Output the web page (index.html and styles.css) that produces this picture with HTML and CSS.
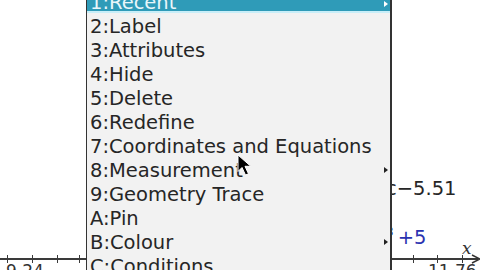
FILE: index.html
```
<!DOCTYPE html>
<html>
<head>
<meta charset="utf-8">
<link rel="stylesheet" href="styles.css">
</head>
<body>
<div class="screen">
  <div class="graph">
    <div class="axis"></div>
    <div class="tick" style="left:7px"></div>
    <div class="tick" style="left:32px"></div>
    <div class="tick" style="left:57px"></div>
    <div class="tick" style="left:79px"></div>
    <div class="tick" style="left:413px"></div>
    <div class="tick" style="left:437px"></div>
    <div class="tick" style="left:462px"></div>
    <svg class="arrowhead" width="10" height="10" viewBox="0 0 10 10"><path d="M1 1 L9 5 L1 9" fill="none" stroke="#333" stroke-width="1.5"/></svg>
    <span class="xlabel">x</span>
    <span class="num left">9.24</span>
    <span class="num right">11.76</span>
    <span class="eq eq1">c&minus;5.51</span>
    <span class="eq eq2"><sup>3</sup>+5</span>
  </div>
  <div class="menu">
    <div class="item active">1:Recent<span class="sub"></span></div>
    <div class="item">2:Label</div>
    <div class="item">3:Attributes</div>
    <div class="item">4:Hide</div>
    <div class="item">5:Delete</div>
    <div class="item">6:Redefine</div>
    <div class="item">7:Coordinates and Equations</div>
    <div class="item">8:Measurement<span class="sub"></span></div>
    <div class="item">9:Geometry Trace</div>
    <div class="item">A:Pin</div>
    <div class="item">B:Colour<span class="sub"></span></div>
    <div class="item">C:Conditions</div>
  </div>
  <svg class="cursor" width="16" height="23" viewBox="0 0 16 23"><path d="M1 1 L1 17.5 L5 13.5 L8.5 21 L11.5 19.8 L8 12.3 L13.8 12.3 Z" fill="#000" stroke="#fff" stroke-width="1"/></svg>
</div>
</body>
</html>
```
FILE: styles.css
```
html, body {
  margin: 0;
  padding: 0;
  background: #fff;
  overflow: hidden;
}
.screen {
  position: relative;
  width: 480px;
  height: 270px;
  overflow: hidden;
  background: #fff;
  font-family: "DejaVu Sans", sans-serif;
}
.graph {
  position: absolute;
  inset: 0;
}
.axis {
  position: absolute;
  left: 0;
  top: 258px;
  width: 478px;
  height: 2px;
  background: #3a3a3a;
}
.tick {
  position: absolute;
  top: 255px;
  width: 1px;
  height: 8px;
  background: #3a3a3a;
}
.arrowhead {
  position: absolute;
  left: 471px;
  top: 254px;
}
.xlabel {
  position: absolute;
  left: 462px;
  top: 238px;
  font-family: "DejaVu Serif", serif;
  font-style: italic;
  font-size: 17px;
  color: #333;
}
.num {
  position: absolute;
  top: 261px;
  font-size: 17px;
  color: #333;
}
.num.left { left: 6px; }
.num.right { left: 428px; }
.eq {
  position: absolute;
  font-size: 19.5px;
}
.eq1 {
  left: 386px;
  top: 177px;
  color: #262626;
}
.eq2 {
  left: 386px;
  top: 225px;
  color: #2a32b0;
}
.eq2 sup {
  font-size: 12px;
  vertical-align: 8px;
  margin-right: 4px;
}
.menu {
  position: absolute;
  left: 86px;
  top: -11px;
  width: 303px;
  height: 300px;
  background: #f2f2f2;
  border-left: 1px solid #333;
  border-right: 2px solid #333;
  font-family: "DejaVu Sans", sans-serif;
  font-size: 19.5px;
  color: #262626;
}
.item {
  position: relative;
  height: 24px;
  line-height: 27px;
  padding-left: 3px;
  white-space: nowrap;
}
.item.active {
  background: #2f9bb8;
  color: #e8f6fa;
  box-shadow: inset 0 -2px 0 #c9eef8;
}
.sub {
  position: absolute;
  right: 2px;
  top: 10px;
  width: 0;
  height: 0;
  border-left: 4px solid #222;
  border-top: 3px solid transparent;
  border-bottom: 3px solid transparent;
}
.item.active .sub {
  border-left-color: #fff;
  top: 12px;
}
.cursor {
  position: absolute;
  left: 237px;
  top: 154px;
}
```
